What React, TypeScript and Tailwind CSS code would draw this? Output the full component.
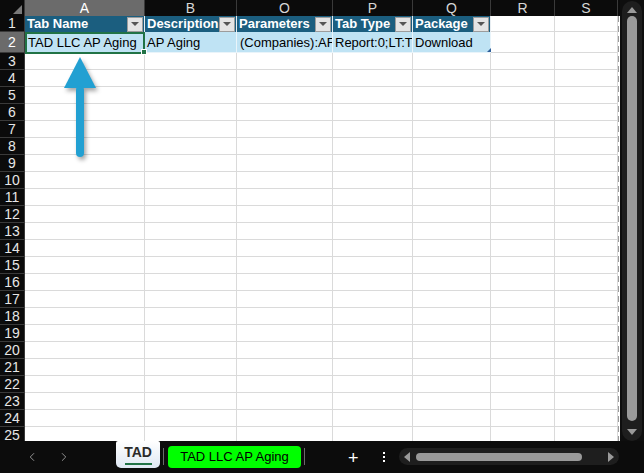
import { ChevronLeft, ChevronRight } from "lucide-react";

type Col = {
  key: string;
  w: string;
  head?: string;
  val?: string;
};

const cols: Col[] = [
  { key: "A", w: "w-[120px]", head: "Tab Name", val: "TAD LLC AP Aging" },
  { key: "B", w: "w-[92px]", head: "Description", val: "AP Aging" },
  { key: "O", w: "w-[96px]", head: "Parameters", val: "(Companies):AF" },
  { key: "P", w: "w-[80px]", head: "Tab Type", val: "Report:0;LT:T" },
  { key: "Q", w: "w-[78px]", head: "Package", val: "Download" },
  { key: "R", w: "w-[64px]" },
  { key: "S", w: "w-[63px]" },
];

const rows = Array.from({ length: 23 }, (_, i) => i + 3);

function FilterButton() {
  return (
    <div className="ml-auto mr-[1px] w-[16px] h-[15px] bg-[#e4e4e4] border border-[#9c9c9c] flex items-center justify-center shrink-0">
      <div className="w-0 h-0 border-l-[4px] border-r-[4px] border-t-[4px] border-l-transparent border-r-transparent border-t-[#555]" />
    </div>
  );
}

function RowNum({ n, active, h }: { n: number; active?: boolean; h: string }) {
  return (
    <div
      className={`w-[25px] ${h} shrink-0 flex items-center justify-center text-[14px] border-r border-b border-[#3a3a3a] ${
        active ? "bg-[#6b6b6b] text-white" : "bg-[#0b0b0b] text-[#e6e6e6]"
      }`}
    >
      {n}
    </div>
  );
}

function Grid() {
  return (
    <div className="relative w-[620px] flex flex-col overflow-hidden bg-white">
      {/* column letters */}
      <div className="flex h-[16px] bg-[#0b0b0b] shrink-0">
        <div className="w-[25px] h-[16px] border-r border-[#3a3a3a] flex items-end justify-end p-[2px]">
          <svg width="9" height="9" viewBox="0 0 9 9">
            <polygon points="9,0 9,9 0,9" fill="#7a7a7a" />
          </svg>
        </div>
        {cols.map((c) => (
          <div
            key={c.key}
            className={`${c.w} h-[16px] shrink-0 flex items-center justify-center text-[14px] border-r border-[#3a3a3a] ${
              c.key === "A" ? "bg-[#6b6b6b] text-white" : "text-[#d6d6d6]"
            }`}
          >
            {c.key}
          </div>
        ))}
      </div>

      <div className="flex">
        <div className="flex flex-col w-[618px] shrink-0">
          {/* row 1: table header */}
          <div className="flex h-[16px]">
            <RowNum n={1} h="h-[16px]" />
            {cols.map((c) =>
              c.head ? (
                <div
                  key={c.key}
                  className={`${c.w} h-[16px] shrink-0 flex items-center bg-[#1b5e7f] border-r border-[#e8eef2] pl-[2px] overflow-hidden`}
                >
                  <span className="text-white font-bold text-[13px] whitespace-nowrap">{c.head}</span>
                  <FilterButton />
                </div>
              ) : (
                <div key={c.key} className={`${c.w} h-[16px] shrink-0 border-r border-b border-[#dadada]`} />
              )
            )}
          </div>

          {/* row 2: data row */}
          <div className="flex h-[21px]">
            <RowNum n={2} active h="h-[21px]" />
            {cols.map((c) =>
              c.val ? (
                <div
                  key={c.key}
                  className={`${c.w} h-[21px] shrink-0 flex items-end pb-[1px] bg-[#bfe3f4] border-r border-b border-[#e9f4fa] overflow-hidden ${
                    c.key === "O" || c.key === "A" ? "pl-[3px]" : "pl-[2px]"
                  }`}
                >
                  <span className="text-black text-[13px] whitespace-nowrap leading-[16px]">{c.val}</span>
                </div>
              ) : (
                <div key={c.key} className={`${c.w} h-[21px] shrink-0 border-r border-b border-[#dadada]`} />
              )
            )}
          </div>

          {rows.map((r) => (
            <div key={r} className="flex h-[17px] shrink-0">
              <RowNum n={r} h="h-[17px]" />
              {cols.map((c) => (
                <div key={c.key} className={`${c.w} h-[17px] shrink-0 border-r border-b border-[#dadada]`} />
              ))}
            </div>
          ))}
        </div>
        <div className="w-[1px] bg-[repeating-linear-gradient(to_bottom,#9a9a9a_0_6px,transparent_6px_10px)]" />
        <div className="w-[1px]" />
      </div>

      {/* selected cell A2 */}
      <div className="absolute left-[25px] top-[32px] w-[120px] h-[22px] border-2 border-[#217346]" />
      <div className="absolute left-[141px] top-[49px] w-[6px] h-[6px] bg-[#217346] border border-white" />
      {/* table resize corner */}
      <div className="absolute left-[487px] top-[48px] w-0 h-0 border-l-[4px] border-b-[4px] border-l-transparent border-b-[#2f5f9a]" />

      {/* callout arrow */}
      <svg
        className="absolute left-[60px] top-[52px] drop-shadow-[2px_3px_2px_rgba(0,0,0,0.35)]"
        width="44"
        height="112"
        viewBox="0 0 44 112"
      >
        <polygon points="20,5 36,36 4,36" fill="#22a0d2" />
        <rect x="16" y="34" width="8" height="71" rx="4" fill="#22a0d2" />
      </svg>
    </div>
  );
}

function VScroll() {
  return (
    <div className="w-[24px] bg-[#0e0e0e] flex justify-center">
      <div className="w-[20px] mt-[1px] rounded-full bg-[#1e1e1e] flex flex-col items-center">
        <div className="mt-[6px] w-0 h-0 border-l-[5px] border-r-[5px] border-b-[6px] border-l-transparent border-r-transparent border-b-[#9a9a9a]" />
        <div className="mt-[3px] w-[10px] flex-1 rounded-full bg-[#9a9a9a]" />
        <div className="mt-[8px] mb-[6px] w-0 h-0 border-l-[5px] border-r-[5px] border-t-[6px] border-l-transparent border-r-transparent border-t-[#9a9a9a]" />
      </div>
    </div>
  );
}

function TabBar() {
  return (
    <div className="h-[32px] flex bg-[#0c0c0c] shrink-0">
      <div className="w-[116px] flex items-center pl-[25px] gap-[18px] text-[#9a9a9a]">
        <ChevronLeft size={14} strokeWidth={1.6} />
        <ChevronRight size={14} strokeWidth={1.6} />
      </div>
      <div className="w-[44px] h-[27px] rounded-b-[5px] rounded-t-[2px] bg-[linear-gradient(to_bottom,#ffffff,#dfe8f3)] flex flex-col items-center justify-center">
        <span className="text-[14px] font-semibold text-[#2a2a2a] leading-none mt-[1px]">TAD</span>
        <div className="mt-[4px] w-[27px] h-[2px] bg-[#217346]" />
      </div>
      <div className="ml-[3px] mt-[7px] w-[1px] h-[17px] bg-[#6a6a6a]" />
      <div className="ml-[4px] mt-[5px] w-[133px] h-[22px] rounded-[4px] bg-[#00ff00] flex items-center justify-center">
        <span className="text-[13px] text-black">TAD LLC AP Aging</span>
      </div>
      <div className="ml-[3px] mt-[7px] w-[1px] h-[17px] bg-[#6a6a6a]" />
      <div className="ml-[43px] mt-[8px] text-white text-[18px] leading-none font-light">+</div>
      <div className="ml-[24px] mt-[11px] flex flex-col gap-[2px]">
        <div className="w-[2px] h-[2px] bg-white" />
        <div className="w-[2px] h-[2px] bg-white" />
        <div className="w-[2px] h-[2px] bg-white" />
      </div>
      <div className="ml-[14px] mt-[7px] w-[220px] h-[17px] rounded-full bg-[#1e1e1e] flex items-center px-[5px]">
        <div className="w-0 h-0 border-t-[5px] border-b-[5px] border-r-[6px] border-t-transparent border-b-transparent border-r-[#9a9a9a]" />
        <div className="ml-[6px] w-[166px] h-[8px] rounded-full bg-[#9a9a9a]" />
        <div className="ml-auto w-0 h-0 border-t-[5px] border-b-[5px] border-l-[6px] border-t-transparent border-b-transparent border-l-[#9a9a9a]" />
      </div>
    </div>
  );
}

export default function App() {
  return (
    <div className="w-[644px] h-[473px] bg-[#0c0c0c] flex flex-col overflow-hidden font-['Liberation_Sans',Arial,sans-serif]">
      <div className="flex h-[441px] shrink-0">
        <Grid />
        <VScroll />
      </div>
      <TabBar />
    </div>
  );
}
